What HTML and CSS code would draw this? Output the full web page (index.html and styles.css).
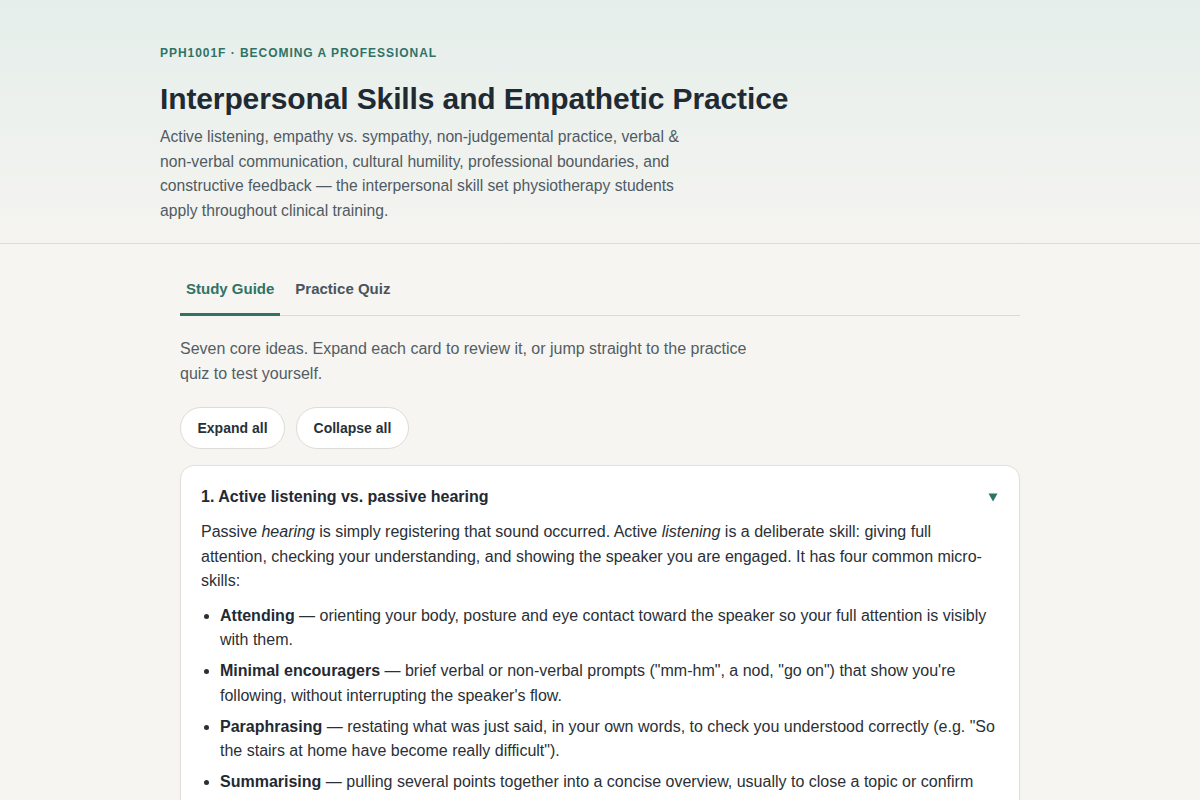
FILE: index.html
```html
<!DOCTYPE html>
<html lang="en">
<head>
<meta charset="utf-8">
<title>Interpersonal Skills and Empathetic Practice</title>
<link rel="stylesheet" href="styles.css">
</head>
<body>
<header class="hero">
  <div class="hero-inner">
    <p class="kicker">PPH1001F · Becoming a Professional</p>
    <h1 class="title">Interpersonal Skills and Empathetic Practice</h1>
    <p class="lede">Active listening, empathy vs. sympathy, non-judgemental practice, verbal &amp; non-verbal communication, cultural humility, professional boundaries, and constructive feedback — the interpersonal skill set physiotherapy students apply throughout clinical training.</p>
  </div>
</header>
<main class="main">
  <nav class="tabs">
    <button class="tab active">Study Guide</button>
    <button class="tab">Practice Quiz</button>
  </nav>
  <p class="intro">Seven core ideas. Expand each card to review it, or jump straight to the practice quiz to test yourself.</p>
  <div class="actions">
    <button class="pill">Expand all</button>
    <button class="pill">Collapse all</button>
  </div>
  <section class="card">
    <div class="card-head">
      <h2 class="card-title">1. Active listening vs. passive hearing</h2>
      <svg class="caret" width="10" height="9" viewBox="0 0 10 9" aria-hidden="true"><path d="M0.5 0.5 H9.5 L5 8.5 Z" fill="#2f7366"/></svg>
    </div>
    <div class="card-body">
      <p>Passive <em>hearing</em> is simply registering that sound occurred. Active <em>listening</em> is a deliberate skill: giving full attention, checking your understanding, and showing the speaker you are engaged. It has four common micro-skills:</p>
      <ul>
        <li><strong>Attending</strong> — orienting your body, posture and eye contact toward the speaker so your full attention is visibly with them.</li>
        <li><strong>Minimal encouragers</strong> — brief verbal or non-verbal prompts ("mm-hm", a nod, "go on") that show you're following, without interrupting the speaker's flow.</li>
        <li><strong>Paraphrasing</strong> — restating what was just said, in your own words, to check you understood correctly (e.g. "So the stairs at home have become really difficult").</li>
        <li><strong>Summarising</strong> — pulling several points together into a concise overview, usually to close a topic or confirm shared understanding before moving on.</li>
      </ul>
    </div>
  </section>
</main>
</body>
</html>
```

FILE: styles.css
```css
* { box-sizing: border-box; }
html, body { margin: 0; padding: 0; }
body {
  background: #f6f5f1;
  font-family: "Liberation Sans", Arial, sans-serif;
  color: #27313a;
}
.hero {
  background: linear-gradient(180deg, #e5eeeb 0%, #f5f4f0 100%);
  border-bottom: 1px solid #dddbd5;
}
.hero-inner {
  padding: 45px 160px 20px;
}
.kicker {
  margin: 0;
  font-size: 12px;
  font-weight: 700;
  letter-spacing: 0.08em;
  text-transform: uppercase;
  color: #2f7366;
  line-height: 16px;
}
.title {
  margin: 20px 0 0;
  font-size: 30px;
  line-height: 36px;
  font-weight: 700;
  letter-spacing: -0.004em;
  color: #1f2a33;
}
.lede {
  margin: 8px 0 0;
  max-width: 540px;
  font-size: 15.68px;
  line-height: 24.5px;
  color: #4f5a63;
}
.main {
  width: 840px;
  margin: 0 auto;
  padding-top: 22px;
}
.tabs {
  display: flex;
  gap: 9px;
  border-bottom: 1px solid #dcdad4;
}
.tab {
  background: none;
  border: none;
  border-bottom: 3px solid transparent;
  margin-bottom: -1px;
  padding: 13px 6px 14px;
  font-family: inherit;
  font-size: 15px;
  font-weight: 700;
  color: #4a545c;
  line-height: 20px;
  cursor: pointer;
}
.tab.active {
  color: #2f7366;
  border-bottom-color: #2f7366;
}
.intro {
  margin: 21px 0 0;
  max-width: 580px;
  font-size: 16px;
  line-height: 24.5px;
  color: #535d65;
}
.actions {
  display: flex;
  gap: 11px;
  margin-top: 21px;
}
.pill {
  height: 42px;
  padding: 0 16.5px;
  background: #fff;
  border: 1px solid #dedcd6;
  border-radius: 21px;
  font-family: inherit;
  font-size: 14px;
  font-weight: 700;
  color: #27313a;
  cursor: pointer;
}
.card {
  margin-top: 16px;
  background: #fff;
  border: 1px solid #e2e0da;
  border-radius: 14px;
  padding: 20px 20px 20px;
  box-shadow: 0 1px 3px rgba(0,0,0,0.04);
}
.card-head {
  display: flex;
  align-items: center;
  justify-content: space-between;
}
.card-title {
  margin: 0;
  font-size: 16px;
  line-height: 22px;
  font-weight: 700;
  color: #1f2a33;
}
.caret {
  display: block;
  margin-right: 1px;
}
.card-body {
  margin-top: 12px;
  font-size: 16px;
  line-height: 24.5px;
  color: #2a3036;
}
.card-body p { margin: 0; }
.card-body ul {
  margin: 10px 0 0;
  padding-left: 19px;
}
.card-body li { margin-bottom: 6.5px; }
.card-body strong { color: #1f2a33; }
```
